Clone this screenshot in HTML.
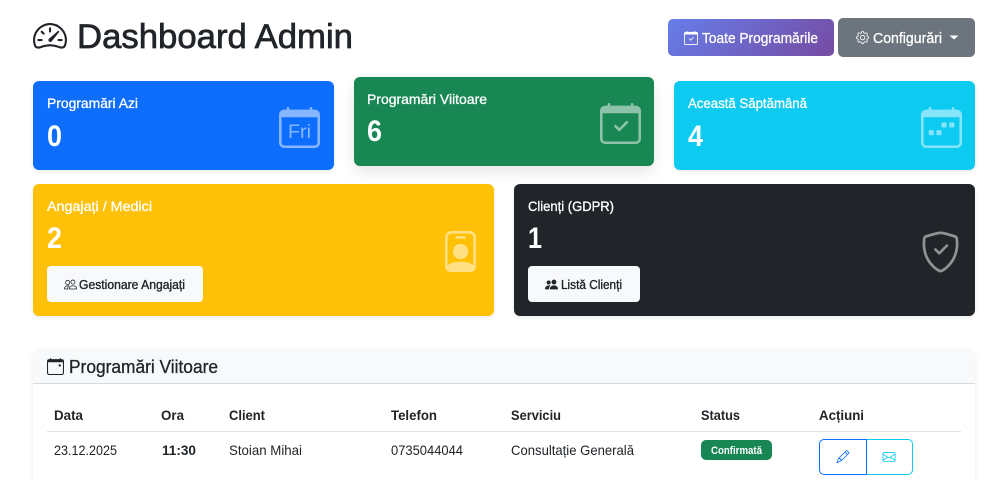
<!DOCTYPE html>
<html lang="ro">
<head>
<meta charset="utf-8">
<title>Dashboard Admin</title>
<style>
html,body{margin:0;padding:0;width:1000px;height:480px;overflow:hidden;background:#fff}
body{position:relative;font-family:"Liberation Sans",sans-serif}
.b{position:absolute;box-sizing:border-box}
.card{border-radius:6px;box-shadow:0 2px 4px rgba(0,0,0,.075)}
svg.o{position:absolute;left:0;top:0;width:1000px;height:480px}
text{font-family:"Liberation Sans",sans-serif}
.m{stroke:currentColor;stroke-width:.3px}
.w{fill:#fff;color:#fff}
.d{fill:#212529;color:#212529}
.t{font-size:14px;font-weight:400}
.n{font-size:30px;font-weight:700;fill:#fff}
.th{font-size:14px;font-weight:700;fill:#212529}
.td{font-size:14px;fill:#212529}
</style>
</head>
<body>
<div class="b" style="left:668px;top:19px;width:166px;height:37px;border-radius:5px;background:linear-gradient(135deg,#667eea,#764ba2)"></div>
<div class="b" style="left:838px;top:18px;width:137px;height:39px;border-radius:5px;background:#6c757d"></div>
<div class="b card" style="left:33px;top:81px;width:301px;height:89px;background:#0d6efd"></div>
<div class="b card" style="left:354px;top:77px;width:300px;height:89px;background:#198754;box-shadow:0 6px 14px rgba(0,0,0,.1)"></div>
<div class="b card" style="left:674px;top:81px;width:301px;height:89px;background:#0dcaf0"></div>
<div class="b card" style="left:33px;top:184px;width:461px;height:132px;background:#ffc107"></div>
<div class="b card" style="left:514px;top:184px;width:461px;height:132px;background:#212529"></div>
<div class="b" style="left:47px;top:266px;width:156px;height:36px;border-radius:4px;background:#f8f9fa"></div>
<div class="b" style="left:528px;top:266px;width:112px;height:36px;border-radius:4px;background:#f8f9fa"></div>
<div class="b" style="left:33px;top:349px;width:942px;height:131px;border-radius:6px 6px 0 0;background:#fff;box-shadow:0 2px 4px rgba(0,0,0,.075)"></div>
<div class="b" style="left:33px;top:349px;width:942px;height:35px;border-radius:6px 6px 0 0;background:#f8f9fa;border-bottom:1px solid #d9dadb"></div>
<div class="b" style="left:47px;top:431px;width:914px;height:1px;background:#dee2e6"></div>
<div class="b" style="left:701px;top:440px;width:71px;height:20px;border-radius:5px;background:#198754"></div>
<div class="b" style="left:866px;top:439px;width:47px;height:36px;border:1px solid #0dcaf0;border-radius:0 5px 5px 0"></div>
<div class="b" style="left:819px;top:439px;width:48px;height:36px;border:1px solid #0d6efd;border-radius:5px 0 0 5px"></div>

<svg class="o" viewBox="0 0 1000 480" xmlns="http://www.w3.org/2000/svg">
<defs>
<path id="cal" d="M3.5 0a.5.5 0 0 1 .5.5V1h8V.5a.5.5 0 0 1 1 0V1h1a2 2 0 0 1 2 2v11a2 2 0 0 1-2 2H2a2 2 0 0 1-2-2V3a2 2 0 0 1 2-2h1V.5a.5.5 0 0 1 .5-.5M1 4v10a1 1 0 0 0 1 1h12a1 1 0 0 0 1-1V4z"/>
<path id="chk" d="M10.854 7.146a.5.5 0 0 1 0 .708l-3 3a.5.5 0 0 1-.708 0l-1.5-1.5a.5.5 0 1 1 .708-.708L7.5 9.793l2.646-2.647a.5.5 0 0 1 .708 0"/>
</defs>

<!-- title -->
<g transform="translate(33 18.8) scale(2.125)" fill="#212529">
<path d="M8 4a.5.5 0 0 1 .5.5V6a.5.5 0 0 1-1 0V4.5A.5.5 0 0 1 8 4M3.732 5.732a.5.5 0 0 1 .707 0l.915.914a.5.5 0 1 1-.708.708l-.914-.915a.5.5 0 0 1 0-.707M2 10a.5.5 0 0 1 .5-.5h1.586a.5.5 0 0 1 0 1H2.5A.5.5 0 0 1 2 10m9.5 0a.5.5 0 0 1 .5-.5h1.5a.5.5 0 0 1 0 1H12a.5.5 0 0 1-.5-.5m.754-4.246a.39.39 0 0 0-.527-.02L7.547 9.31a.91.91 0 1 0 1.302 1.258l3.434-4.297a.39.39 0 0 0-.029-.518z"/>
<path fill-rule="evenodd" d="M0 10a8 8 0 1 1 15.547 2.661c-.442 1.253-1.845 1.602-2.932 1.25C11.309 13.488 9.475 13 8 13c-1.474 0-3.31.488-4.615.911-1.087.352-2.49.003-2.932-1.25A8 8 0 0 1 0 10m8-7a7 7 0 0 0-6.603 9.329c.203.575.923.876 1.68.63C4.397 12.533 6.358 12 8 12s3.604.532 4.923.96c.757.245 1.477-.056 1.68-.631A7 7 0 0 0 8 3"/>
</g>
<text x="77" y="48" class="d m" font-size="34" textLength="276" lengthAdjust="spacingAndGlyphs" style="stroke-width:.7px">Dashboard Admin</text>

<!-- top buttons -->
<g transform="translate(684 31) scale(.875)" fill="#fff"><use href="#cal"/><use href="#chk"/></g>
<text x="702" y="43" class="w m" font-size="14.5" textLength="116" lengthAdjust="spacingAndGlyphs" style="stroke-width:.3px">Toate Programările</text>
<g transform="translate(856 31) scale(.82)" fill="#fff">
<path d="M8 4.754a3.246 3.246 0 1 0 0 6.492 3.246 3.246 0 0 0 0-6.492M5.754 8a2.246 2.246 0 1 1 4.492 0 2.246 2.246 0 0 1-4.492 0"/>
<path d="M9.796 1.343c-.527-1.79-3.065-1.79-3.592 0l-.094.319a.873.873 0 0 1-1.255.52l-.292-.16c-1.64-.892-3.433.902-2.54 2.541l.159.292a.873.873 0 0 1-.52 1.255l-.319.094c-1.79.527-1.79 3.065 0 3.592l.319.094a.873.873 0 0 1 .52 1.255l-.16.292c-.892 1.64.901 3.434 2.541 2.54l.292-.159a.873.873 0 0 1 1.255.52l.094.319c.527 1.79 3.065 1.79 3.592 0l.094-.319a.873.873 0 0 1 1.255-.52l.292.16c1.64.893 3.434-.902 2.54-2.541l-.159-.292a.873.873 0 0 1 .52-1.255l.319-.094c1.79-.527 1.79-3.065 0-3.592l-.319-.094a.873.873 0 0 1-.52-1.255l.16-.292c.893-1.64-.902-3.433-2.541-2.54l-.292.159a.873.873 0 0 1-1.255-.52zm-2.633.283c.246-.835 1.428-.835 1.674 0l.094.319a1.873 1.873 0 0 0 2.693 1.115l.291-.16c.764-.415 1.6.42 1.184 1.185l-.159.292a1.873 1.873 0 0 0 1.116 2.692l.318.094c.835.246.835 1.428 0 1.674l-.319.094a1.873 1.873 0 0 0-1.115 2.693l.16.291c.415.764-.42 1.6-1.185 1.184l-.291-.159a1.873 1.873 0 0 0-2.693 1.116l-.094.318c-.246.835-1.428.835-1.674 0l-.094-.319a1.873 1.873 0 0 0-2.692-1.115l-.292.16c-.764.415-1.6-.42-1.184-1.185l.159-.291A1.873 1.873 0 0 0 1.945 8.93l-.319-.094c-.835-.246-.835-1.428 0-1.674l.319-.094A1.873 1.873 0 0 0 3.06 4.377l-.16-.292c-.415-.764.42-1.6 1.185-1.184l.292.159a1.873 1.873 0 0 0 2.692-1.115z"/>
</g>
<text x="873" y="43" class="w m" font-size="14.5" textLength="69" lengthAdjust="spacingAndGlyphs" style="stroke-width:.3px">Configurări</text>
<path d="M949.5 35.5h9l-4.5 4z" fill="#fff"/>

<!-- stat cards text -->
<text x="47" y="108" class="t w m" textLength="91" lengthAdjust="spacingAndGlyphs">Programări Azi</text>
<text x="47" y="146" class="n" textLength="15" lengthAdjust="spacingAndGlyphs">0</text>
<g transform="translate(279 107) scale(2.5625)" fill="#fff" fill-opacity=".5"><use href="#cal"/></g>
<text x="288" y="138" font-size="19" fill="#fff" fill-opacity=".5" textLength="23" lengthAdjust="spacingAndGlyphs">Fri</text>

<text x="367" y="104" class="t w m" textLength="120" lengthAdjust="spacingAndGlyphs">Programări Viitoare</text>
<text x="367" y="141" class="n" textLength="15" lengthAdjust="spacingAndGlyphs">6</text>
<g transform="translate(600 103) scale(2.5625)" fill="#fff" fill-opacity=".5"><path d="M3.5 0a.5.5 0 0 1 .5.5V1h8V.5a.5.5 0 0 1 1 0V1h1a2 2 0 0 1 2 2v11a2 2 0 0 1-2 2H2a2 2 0 0 1-2-2V3a2 2 0 0 1 2-2h1V.5a.5.5 0 0 1 .5-.5M1 4v10a1 1 0 0 0 1 1h12a1 1 0 0 0 1-1V4z"/><path d="M10.854 7.146a.5.5 0 0 1 0 .708l-3 3a.5.5 0 0 1-.708 0l-1.5-1.5a.5.5 0 1 1 .708-.708L7.5 9.793l2.646-2.647a.5.5 0 0 1 .708 0"/></g>

<text x="688" y="108" class="t w m" textLength="119" lengthAdjust="spacingAndGlyphs">Această Săptămână</text>
<text x="688" y="146" class="n" textLength="15" lengthAdjust="spacingAndGlyphs">4</text>
<g transform="translate(921 107) scale(2.5625)" fill="#fff" fill-opacity=".5"><use href="#cal"/><path d="M11 6.5a.5.5 0 0 1 .5-.5h1a.5.5 0 0 1 .5.5v1a.5.5 0 0 1-.5.5h-1a.5.5 0 0 1-.5-.5zm-3 0a.5.5 0 0 1 .5-.5h1a.5.5 0 0 1 .5.5v1a.5.5 0 0 1-.5.5h-1a.5.5 0 0 1-.5-.5zm-5 3a.5.5 0 0 1 .5-.5h1a.5.5 0 0 1 .5.5v1a.5.5 0 0 1-.5.5h-1a.5.5 0 0 1-.5-.5zm3 0a.5.5 0 0 1 .5-.5h1a.5.5 0 0 1 .5.5v1a.5.5 0 0 1-.5.5h-1a.5.5 0 0 1-.5-.5z"/></g>

<text x="47" y="211" class="t w m" textLength="105" lengthAdjust="spacingAndGlyphs">Angajați / Medici</text>
<text x="47" y="248" class="n" textLength="15" lengthAdjust="spacingAndGlyphs">2</text>
<g transform="translate(440 231) scale(2.5625)" fill="#fff" fill-opacity=".5">
<path d="M6.5 2a.5.5 0 0 0 0 1h3a.5.5 0 0 0 0-1zM11 8a3 3 0 1 1-6 0 3 3 0 0 1 6 0"/>
<path d="M4.5 0A2.5 2.5 0 0 0 2 2.5V14a2 2 0 0 0 2 2h8a2 2 0 0 0 2-2V2.5A2.5 2.5 0 0 0 11.5 0zM3 2.5A1.5 1.5 0 0 1 4.5 1h7A1.5 1.5 0 0 1 13 2.5v10.795a4.2 4.2 0 0 0-.776-.492C11.392 12.387 10.063 12 8 12s-3.392.387-4.224.803a4.2 4.2 0 0 0-.776.492z"/>
</g>
<g transform="translate(64 278) scale(.8125)" fill="#212529"><path d="M15 14s1 0 1-1-1-4-5-4-5 3-5 4 1 1 1 1zm-7.978-1L7 12.996c.001-.264.167-1.03.76-1.72C8.312 10.629 9.282 10 11 10c1.717 0 2.687.63 3.24 1.276.593.69.758 1.457.76 1.72l-.008.002-.014.002zM11 7a2 2 0 1 0 0-4 2 2 0 0 0 0 4m3-2a3 3 0 1 1-6 0 3 3 0 0 1 6 0M6.936 9.28a6 6 0 0 0-1.23-.247A7 7 0 0 0 5 9c-4 0-5 3-5 4q0 1 1 1h4.216A2.24 2.24 0 0 1 5 13c0-1.01.377-2.042 1.09-2.904.243-.294.526-.569.846-.816M4.92 10A5.5 5.5 0 0 0 4 13H1c0-.26.164-1.03.76-1.724.545-.636 1.492-1.256 3.16-1.275ZM1.5 5.5a3 3 0 1 1 6 0 3 3 0 0 1-6 0m3-2a2 2 0 1 0 0 4 2 2 0 0 0 0-4"/></g>
<text x="79" y="289" class="d m" font-size="12.5" textLength="106" lengthAdjust="spacingAndGlyphs" style="stroke-width:.35px">Gestionare Angajați</text>

<text x="528" y="211" class="t w m" textLength="86" lengthAdjust="spacingAndGlyphs">Clienți (GDPR)</text>
<text x="528" y="248" class="n" textLength="14" lengthAdjust="spacingAndGlyphs">1</text>
<g transform="translate(920 231.5) scale(2.5625)" fill="#fff" fill-opacity=".5">
<path d="M5.338 1.59a61 61 0 0 0-2.837.856.48.48 0 0 0-.328.39c-.554 4.157.726 7.19 2.253 9.188a10.7 10.7 0 0 0 2.287 2.233c.346.244.652.42.893.533q.18.085.293.118a1 1 0 0 0 .101.025 1 1 0 0 0 .1-.025q.114-.034.294-.118c.24-.113.547-.29.893-.533a10.7 10.7 0 0 0 2.287-2.233c1.527-1.997 2.807-5.031 2.253-9.188a.48.48 0 0 0-.328-.39c-.651-.213-1.75-.56-2.837-.855C9.552 1.29 8.531 1.067 8 1.067c-.53 0-1.552.223-2.662.524zM5.072.56C6.157.265 7.31 0 8 0s1.843.265 2.928.56c1.11.3 2.229.655 2.887.87a1.54 1.54 0 0 1 1.044 1.262c.596 4.477-.787 7.795-2.465 9.99a11.8 11.8 0 0 1-2.517 2.453 7 7 0 0 1-1.048.625c-.28.132-.581.24-.829.24s-.548-.108-.829-.24a7 7 0 0 1-1.048-.625 11.8 11.8 0 0 1-2.517-2.453C1.928 10.487.545 7.169 1.141 2.692A1.54 1.54 0 0 1 2.185 1.43 63 63 0 0 1 5.072.56"/>
<path d="M10.854 5.146a.5.5 0 0 1 0 .708l-3 3a.5.5 0 0 1-.708 0l-1.5-1.5a.5.5 0 1 1 .708-.708L7.5 7.793l2.646-2.647a.5.5 0 0 1 .708 0"/>
</g>
<g transform="translate(545 278) scale(.8125)" fill="#212529"><path d="M7 14s-1 0-1-1 1-4 5-4 5 3 5 4-1 1-1 1zm4-6a3 3 0 1 0 0-6 3 3 0 0 0 0 6m-5.784 6A2.24 2.24 0 0 1 5 13c0-1.355.68-2.75 1.936-3.72A6.3 6.3 0 0 0 5 9c-4 0-5 3-5 4s1 1 1 1zM4.5 8a2.5 2.5 0 1 0 0-5 2.5 2.5 0 0 0 0 5"/></g>
<text x="561" y="289" class="d m" font-size="12.5" textLength="61" lengthAdjust="spacingAndGlyphs" style="stroke-width:.35px">Listă Clienți</text>

<!-- table card -->
<g transform="translate(47 358) scale(1.0625)" fill="#212529"><use href="#cal"/><path d="M11 6.5a.5.5 0 0 1 .5-.5h1a.5.5 0 0 1 .5.5v1a.5.5 0 0 1-.5.5h-1a.5.5 0 0 1-.5-.5z"/></g>
<text x="69" y="373" class="d m" font-size="18" textLength="149" lengthAdjust="spacingAndGlyphs">Programări Viitoare</text>

<text x="54" y="420" class="th" textLength="29" lengthAdjust="spacingAndGlyphs">Data</text>
<text x="161" y="420" class="th" textLength="23" lengthAdjust="spacingAndGlyphs">Ora</text>
<text x="229" y="420" class="th" textLength="36" lengthAdjust="spacingAndGlyphs">Client</text>
<text x="391" y="420" class="th" textLength="46" lengthAdjust="spacingAndGlyphs">Telefon</text>
<text x="511" y="420" class="th" textLength="50" lengthAdjust="spacingAndGlyphs">Serviciu</text>
<text x="701" y="420" class="th" textLength="39" lengthAdjust="spacingAndGlyphs">Status</text>
<text x="819" y="420" class="th" textLength="45" lengthAdjust="spacingAndGlyphs">Acțiuni</text>

<text x="54" y="455" class="td" textLength="63" lengthAdjust="spacingAndGlyphs">23.12.2025</text>
<text x="162" y="455" class="th" textLength="34" lengthAdjust="spacingAndGlyphs">11:30</text>
<text x="229" y="455" class="td" textLength="73" lengthAdjust="spacingAndGlyphs">Stoian Mihai</text>
<text x="391" y="455" class="td" textLength="72" lengthAdjust="spacingAndGlyphs">0735044044</text>
<text x="511" y="455" class="td" textLength="123" lengthAdjust="spacingAndGlyphs">Consultație Generală</text>
<text x="711" y="454" font-size="11" font-weight="700" fill="#fff" textLength="51" lengthAdjust="spacingAndGlyphs">Confirmată</text>

<g transform="translate(836.5 450) scale(.8125)" fill="#0d6efd"><path d="M12.146.146a.5.5 0 0 1 .708 0l3 3a.5.5 0 0 1 0 .708l-10 10a.5.5 0 0 1-.168.11l-5 2a.5.5 0 0 1-.65-.65l2-5a.5.5 0 0 1 .11-.168zM11.207 2.5 13.5 4.793 14.793 3.5 12.5 1.207zm1.586 3L10.5 3.207 4 9.707V10h.5a.5.5 0 0 1 .5.5v.5h.5a.5.5 0 0 1 .5.5v.5h.293zm-9.761 5.175-.106.106-1.528 3.821 3.821-1.528.106-.106A.5.5 0 0 1 5 12.5V12h-.5a.5.5 0 0 1-.5-.5V11h-.5a.5.5 0 0 1-.468-.325"/></g>
<g transform="translate(882.5 450.5) scale(.8125)" fill="#0dcaf0"><path d="M0 4a2 2 0 0 1 2-2h12a2 2 0 0 1 2 2v8a2 2 0 0 1-2 2H2a2 2 0 0 1-2-2zm2-1a1 1 0 0 0-1 1v.217l7 4.2 7-4.2V4a1 1 0 0 0-1-1zm13 2.383-4.708 2.825L15 11.105zm-.034 6.876-5.64-3.471L8 9.583l-1.326-.795-5.64 3.47A1 1 0 0 0 2 13h12a1 1 0 0 0 .966-.741M1 11.105l4.708-2.897L1 5.383z"/></g>
</svg>
</body>
</html>
